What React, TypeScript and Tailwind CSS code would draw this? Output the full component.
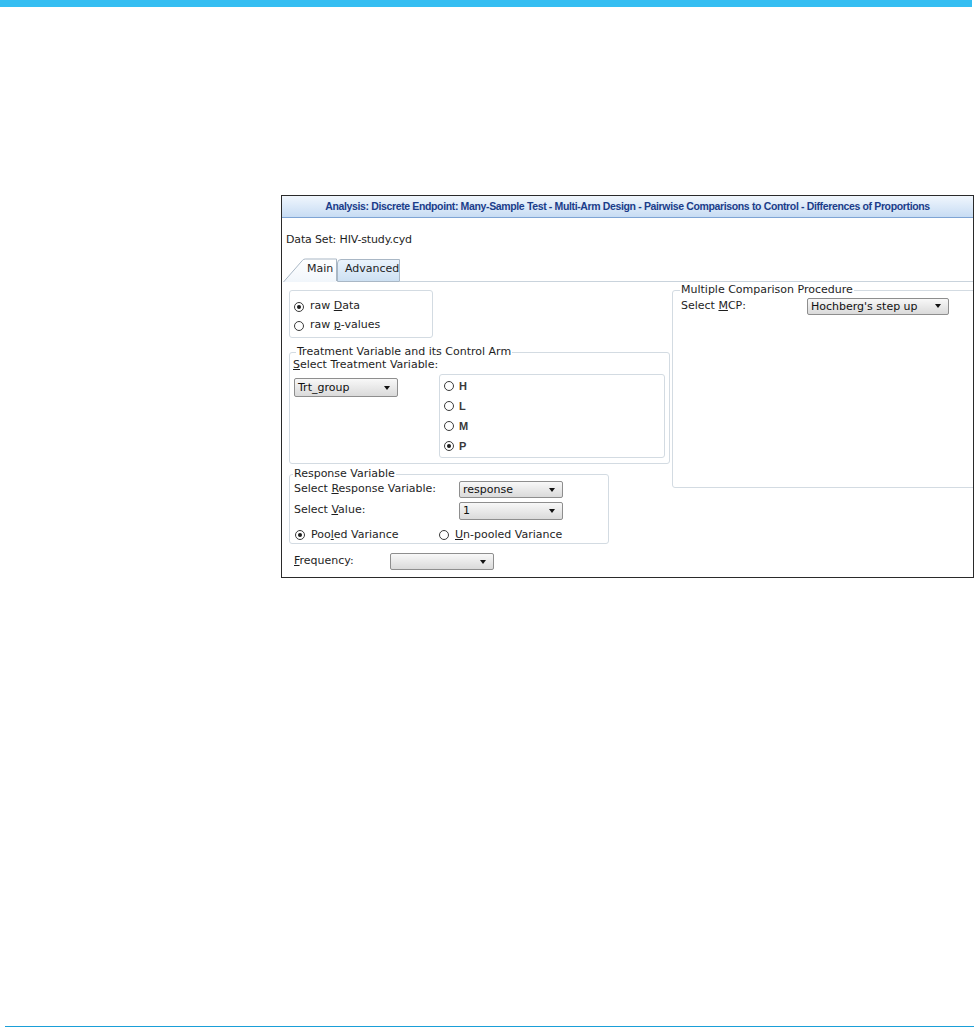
import React from "react";

function U({ children }: { children: React.ReactNode }) {
  return <span className="underline underline-offset-[1px]">{children}</span>;
}

function Radio({ checked = false }: { checked?: boolean }) {
  return (
    <span className="flex h-[10px] w-[10px] shrink-0 items-center justify-center rounded-full border border-[#3a3a3a] bg-white">
      {checked && <span className="h-[4px] w-[4px] rounded-full bg-[#1c1c1c]" />}
    </span>
  );
}

function Dropdown({ value, className = "" }: { value?: string; className?: string }) {
  return (
    <div
      className={`flex items-center justify-between rounded-[2px] border border-[#8e8e8e] bg-linear-to-b from-[#f8f8f8] to-[#dadada] pl-[3px] pr-[7px] text-[#111] ${className}`}
    >
      <span className="leading-[13px]">{value}</span>
      <span className="h-0 w-0 border-x-[3px] border-t-[4px] border-x-transparent border-t-[#111]" />
    </div>
  );
}

function MainTab() {
  return (
    <div className="relative h-[24px] w-[54px]">
      <svg className="absolute inset-0" width="54" height="24" viewBox="0 0 54 24" fill="none">
        <defs>
          <linearGradient id="main-tab-fill" x1="0" y1="0" x2="0" y2="24" gradientUnits="userSpaceOnUse">
            <stop offset="0%" stopColor="#ffffff" />
            <stop offset="100%" stopColor="#f1f6fb" />
          </linearGradient>
        </defs>
        <path d="M0.5 24 L19.5 2.3 Q20.6 1 22.4 1 L53.5 1 L53.5 24 Z" fill="url(#main-tab-fill)" />
        <path d="M0.5 24 L19.5 2.3 Q20.6 1 22.4 1 L53.5 1 L53.5 23" stroke="#a9b7c5" strokeWidth="1" />
      </svg>
      <span className="relative block pl-[24px] pt-[4px] leading-[14px]">Main</span>
    </div>
  );
}

export default function App() {
  return (
    <div className="min-h-[1028px] bg-white font-['DejaVu_Sans',sans-serif] text-[11px] text-[#1e1e1e]">
      <div className="h-[7px] w-[972px] bg-[#35bef2]" />

      <div className="ml-[281px] mt-[188px] h-[383px] w-[693px] overflow-hidden border border-[#2a2a2a]">
        <div className="flex h-[22px] items-center justify-center border-b border-[#7ea4d4] bg-linear-to-b from-[#f0f6fd] to-[#c7dcf3] font-['Liberation_Sans',sans-serif] text-[10.5px] font-bold tracking-[-0.36px] text-[#1b3d8a]">
          Analysis: Discrete Endpoint: Many-Sample Test - Multi-Arm Design - Pairwise Comparisons to Control - Differences of Proportions
        </div>

        <div className="mt-[15px] pl-[4px] leading-[14px] tracking-[-0.15px]">Data Set: HIV-study.cyd</div>

        <div className="mt-[11px] flex items-end pl-[1px]">
          <MainTab />
          <div className="h-[23px] w-[63px] rounded-tl-[4px] border border-[#a9b7c5] bg-linear-to-b from-[#eaf3fc] to-[#cde0f2] pl-[7px] pt-[2px] leading-[14px]">
            Advanced
          </div>
          <div className="h-[23px] flex-1 border-b border-[#c9d3dc]" />
        </div>

        <div className="flex items-start">
          <div className="ml-[7px] flex w-[381px] shrink-0 flex-col">
            <div className="mt-[8px] h-[48px] w-[144px] rounded-[3px] border border-[#d3dbe2] pb-[2px] pl-[4px] pt-[6px]">
              <div className="flex h-[19px] items-center gap-[6px]">
                <Radio checked />
                <span>
                  raw <U>D</U>ata
                </span>
              </div>
              <div className="flex h-[19px] items-center gap-[6px]">
                <Radio />
                <span>
                  raw <U>p</U>-values
                </span>
              </div>
            </div>

            <fieldset className="mt-[8px] rounded-[3px] border border-[#d3dbe2] pb-[5px]">
              <legend className="ml-[6px] px-[1px] leading-[12px]">Treatment Variable and its Control Arm</legend>
              <div className="pl-[3px] leading-[13px]">
                <U>S</U>elect Treatment Variable:
              </div>
              <div className="mt-[3px] flex items-start pl-[4px]">
                <Dropdown value="Trt_group" className="mt-[4px] h-[19px] w-[104px]" />
                <div className="ml-[41px] h-[84px] w-[226px] rounded-[3px] border border-[#d3dbe2] py-[1px] pl-[4px] font-['Liberation_Sans',sans-serif] font-bold text-[#3a3a3a]">
                  {["H", "L", "M", "P"].map((arm) => (
                    <div key={arm} className="flex h-[20px] items-center gap-[5px]">
                      <Radio checked={arm === "P"} />
                      <span>{arm}</span>
                    </div>
                  ))}
                </div>
              </div>
            </fieldset>

            <fieldset className="mt-[4px] w-[320px] rounded-[3px] border border-[#d3dbe2]">
              <legend className="ml-[3px] px-[1px] leading-[12px]">Response Variable</legend>
              <div className="flex h-[19px] items-center pl-[4px]">
                <span className="w-[165px]">
                  Select <U>R</U>esponse Variable:
                </span>
                <Dropdown value="response" className="h-[17px] w-[104px]" />
              </div>
              <div className="mt-[2px] flex h-[19px] items-center pl-[4px]">
                <span className="w-[165px]">
                  Select <U>V</U>alue:
                </span>
                <Dropdown value="1" className="h-[18px] w-[104px]" />
              </div>
              <div className="mt-[7px] flex h-[16px] items-center pl-[5px]">
                <div className="flex w-[144px] items-center gap-[6px]">
                  <Radio checked />
                  <span>
                    Poo<U>l</U>ed Variance
                  </span>
                </div>
                <div className="flex items-center gap-[6px]">
                  <Radio />
                  <span>
                    <U>U</U>n-pooled Variance
                  </span>
                </div>
              </div>
            </fieldset>

            <div className="mt-[9px] flex h-[17px] items-center pl-[5px]">
              <span className="w-[96px]">
                <U>F</U>requency:
              </span>
              <Dropdown className="h-[17px] w-[104px]" />
            </div>
          </div>

          <fieldset className="ml-[2px] mt-[2px] w-[306px] shrink-0 rounded-[3px] border border-[#d3dbe2]">
            <legend className="ml-[7px] px-[1px] leading-[12px]">Multiple Comparison Procedure</legend>
            <div className="h-[190px]">
              <div className="mt-[1px] flex h-[18px] items-center pl-[8px]">
                <span className="w-[126px]">
                  Select <U>M</U>CP:
                </span>
                <Dropdown value="Hochberg's step up" className="h-[17px] w-[142px]" />
              </div>
            </div>
          </fieldset>
        </div>
      </div>

      <div className="ml-[5px] mt-[448px] h-px bg-[#1a9fd8]" />
    </div>
  );
}
